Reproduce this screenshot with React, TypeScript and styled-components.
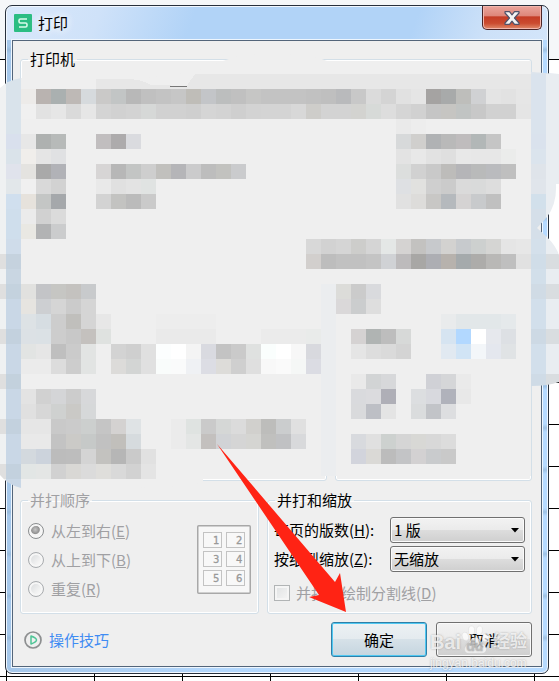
import React from 'react';
import styled, { createGlobalStyle, css } from 'styled-components';

const GlobalStyle = createGlobalStyle`
  * { box-sizing: border-box; }
  body {
    margin: 0;
    font-family: "Noto Sans CJK SC", sans-serif;
    font-size: 15px;
    line-height: 22px;
    color: #000;
  }
  button, select, input { font: inherit; color: inherit; margin: 0; }
`;

const Sheet = styled.div`
  position: relative;
  display: flex;
  min-height: 100vh;
  padding: 5px 10px 7px 5px;
  overflow: hidden;
  background:
    linear-gradient(#f5f7f9 59px, #000 59px, #000 60px, #fff 60px, #fff 250px, transparent 250px),
    linear-gradient(#000 1px, transparent 1px) 0 4px / 100% 42px,
    linear-gradient(90deg, #000 1px, transparent 1px) 6px 0 / 88px 100%,
    #fff;
`;

const Window = styled.section`
  display: flex;
  flex: 1;
  flex-direction: column;
  padding: 0 6px 6px;
  border: 1px solid #28303c;
  border-radius: 7px;
  box-shadow: inset 0 0 0 1px #f1f7fe;
  background:
    linear-gradient(110deg, #d9e8fb 0, #cfe2f9 90px, #b1d3f7 180px, #b1d3f7 390px, #cde1f8 460px, #d3e5fa 100%) 0 0 / 100% 34px no-repeat,
    linear-gradient(transparent 0, #8fb2d299 4px, transparent 8px) 0 40px / 100% 42px,
    linear-gradient(90deg, #a5c7ea 0, #b4d8fd 40%, #b6daff 100%);
`;

const TitleBar = styled.header`
  display: flex;
  align-items: flex-start;
  justify-content: space-between;
  height: 34px;
  padding-left: 2px;
`;

const Title = styled.h1`
  display: flex;
  align-items: center;
  gap: 6px;
  height: 34px;
  margin: 0;
  font-size: 15px;
  font-weight: 400;
  text-shadow: 0 0 8px #fff, 0 0 8px #fff;
`;

const CloseButton = styled.button`
  display: flex;
  align-items: center;
  justify-content: center;
  width: 60px;
  height: 24px;
  padding: 0;
  border: 1px solid #4c2426;
  border-top: 0;
  border-radius: 0 0 5px 5px;
  box-shadow: inset 0 0 0 1px #f3b7ad;
  background: linear-gradient(#eaa59c 0, #dd8478 45%, #c43b25 46%, #cb4b30 75%, #e08b6b 100%);
`;

const Body = styled.main`
  display: flex;
  flex: 1;
  flex-direction: column;
  gap: 8px;
  padding: 7px 9px 9px 7px;
  border: 1px solid #53657a;
  box-shadow: 0 0 0 1px #eef6fe;
  background: #efefef;
`;

const Group = styled.fieldset<{ $grow?: boolean }>`
  min-width: 0;
  margin: 0;
  padding: 6px 7px 8px;
  border: 1px solid #d3dfe8;
  border-radius: 3px;
  box-shadow: inset 0 0 0 1px #fff;
  ${(p) => p.$grow && css`flex: 1;`}
`;

const Legend = styled.legend`
  padding: 0 2px;
`;

const Pair = styled.div<{ $columns: string; $grow?: boolean }>`
  display: grid;
  grid-template-columns: ${(p) => p.$columns};
  gap: 8px;
  ${(p) => p.$grow && css`flex: 1;`}
`;

const DisabledGroup = styled(Group)`
  color: #a0a0a3;
`;

const OrderLayout = styled.div`
  display: flex;
  justify-content: space-between;
`;

const Options = styled.div`
  display: flex;
  flex-direction: column;
  gap: 7px;
  padding-top: 3px;
`;

const Option = styled.label`
  display: flex;
  align-items: center;
  gap: 7px;
  height: 22px;
  white-space: nowrap;
`;

const Radio = styled.input`
  appearance: none;
  width: 16px;
  height: 16px;
  border: 1px solid #a9acaf;
  border-radius: 50%;
  box-shadow: inset 0 0 0 2px #f6f6f6;
  background: linear-gradient(135deg, #d5d8da, #f4f4f4 70%);
  &:checked {
    border-color: #8b8e90;
    background: radial-gradient(circle at 45% 40%, #c6c6c6 0, #929292 4px, #f4f4f4 5px);
  }
`;

const CheckBox = styled.input`
  appearance: none;
  width: 16px;
  height: 16px;
  border: 1px solid #b1b4b5;
  box-shadow: inset 0 0 0 2px #f5f5f5;
  background: linear-gradient(135deg, #dfe1e2, #f6f6f6);
`;

const Preview = styled.div`
  display: flex;
  padding-top: 8px;
`;

const Scaling = styled.div`
  display: grid;
  grid-template-columns: 1fr 135px;
  row-gap: 3px;
  align-items: center;
  margin-right: -1px;
  margin-left: -1px;
  white-space: nowrap;
`;

const DropDown = styled.span`
  position: relative;
  display: block;
  svg {
    position: absolute;
    top: 11px;
    right: 6px;
    pointer-events: none;
  }
`;

const Select = styled.select`
  display: block;
  appearance: none;
  width: 100%;
  height: 26px;
  padding: 0 20px 0 3px;
  border: 1px solid #707070;
  border-radius: 3px;
  box-shadow: inset 0 0 0 1px #fbfbfb;
  background: linear-gradient(#f2f2f2 0, #ebebeb 48%, #dddddd 50%, #cfcfcf 100%);
`;

const LineOption = styled(Option)`
  height: 24px;
  margin-top: 9px;
  margin-left: -1px;
  gap: 6px;
  color: #a0a0a3;
`;

const Footer = styled.footer`
  display: flex;
  align-items: center;
  justify-content: space-between;
`;

const Tips = styled.a`
  display: flex;
  align-items: center;
  gap: 7px;
  padding-left: 4px;
  color: #3f8cf3;
  text-decoration: none;
`;

const Actions = styled.div`
  display: flex;
  gap: 9px;
`;

const Push = styled.button<{ $primary?: boolean }>`
  width: 96px;
  height: 35px;
  padding: 0;
  border: 1px solid ${(p) => (p.$primary ? '#2f7fa8' : '#707070')};
  border-radius: 3px;
  box-shadow: inset 0 0 0 ${(p) => (p.$primary ? '1px #4fc8f2' : '1px #fafafa')};
  background: ${(p) => p.$primary
    ? 'linear-gradient(#edf1f4 0, #e4ebef 48%, #d6e1e8 50%, #c5d5df 100%)'
    : 'linear-gradient(#f2f2f2 0, #ebebeb 48%, #dddddd 50%, #cfcfcf 100%)'};
`;

const Overlay = styled.svg`
  position: absolute;
  top: 0;
  left: 0;
  pointer-events: none;
`;

const Watermark = styled.div`
  position: absolute;
  right: 32px;
  bottom: 11px;
  color: #ffffffc0;
  font-family: "Liberation Sans", "Noto Sans CJK SC", sans-serif;
  text-shadow: 0 0 2px #6668;
  white-space: nowrap;
  pointer-events: none;
`;

const Brand = styled.div`
  display: flex;
  align-items: flex-end;
  height: 34px;
  font-size: 20px;
  font-weight: 700;
  line-height: 28px;
`;

const BrandSuffix = styled.span`
  margin-left: 4px;
  font-size: 17px;
`;

const Address = styled.div`
  font-size: 12px;
  line-height: 14px;
`;

const CELL = 15;
const ORIGIN_X = 6;
const ORIGIN_Y = 74;

// Each entry: row, first column, colours; two digits stand for a neutral grey.
const cells: [number, number, string][] = [
  [1, 1, 'edebe9 b9b3b0 aab0b0 beb9b6 d6dadd cac9c8 c2c5c5 b8 c0 c3 c6 bfbdb8 c3c5c8 bcbebe c0 c6c6c5 c3 c3 c3 c1 bf b9babc c8 db d4 e1 e5 a5a3a2 a8aaaa bebebb d0d1d3 e4 e2 e6'],
  [2, 1, 'f0 e2 e6 da e6 d4 d1 d3 d6d8d7 d1 d1 cf d5 d3 cf d3 d4 d4 d8 cecdca d3 d3 d3d3d0 d7dad8 dd d5 d1 c5 c6c5c2 c1c4c3 c8 d1 d1 e5'],
  [3, 26, 'ea ed'],
  [4, 1, 'e7 aeb1b0 b7bab9'], [4, 6, 'c1bebf adabac dadbdf'], [4, 26, 'd7d9da d0cfcd b0b2b4 b9 bfbcbd b2b7b7 c5'],
  [5, 1, 'f0eeeb e5 e0e1e3'], [5, 26, 'e3 e8 e2 df e8 e7 e7 ebeceb'],
  [6, 1, 'e4e3e0 a9 b1b2b7'], [6, 6, 'd7d5d5 b7 c3c5c4 ce c1c0bd b5b5b8 cbcbcc bd c2c2bf cacbcd'], [6, 26, 'dcdedd d1 c9 bdbcba b5b5b8 b9baba babbbe bf'],
  [7, 1, 'f0 d9 d2'], [7, 6, 'e9 e0 e3 e0e3e2'], [7, 26, 'dee0e3 e1e1df cf cb da d9dada dd'],
  [8, 1, 'e6e2dc c4c6c5 a5a8ab'], [8, 6, 'd3 c3c3c1 bb ca'], [8, 26, 'e1 dddcda c8c7c5 b5b9bd d5d3d3 c8cacc c0'],
  [9, 1, 'eb d1 db'],
  [10, 1, 'e9e8e3 b2b3b4 cbcccd'],
  [11, 20, 'd8 d2 d5 cdcdcb d5 e4e7e6 d5d3d2 c3c2c0 c7c9cc d3d2d0 c7cacd cdd0cf d5d5d3 e5 e7'],
  [12, 20, 'd2cfcd bd c1 c1 c4 d0d2d5 bdbbbc a8a7a5 adaeb3 b7b2ad a5aaac adacaa b9b8b6 bf e1'],
  [14, 1, 'e1e1df c3c4c7 c6c6c3 c4c2bf c8cacc'], [14, 22, 'dcdcd9 cb d9dadd'],
  [15, 1, 'e6e4e0 cdcfd2 d5 cb d5'], [15, 22, 'dad8d9 cbcdce de'],
  [16, 1, 'dde2e5 d6dde2 cd c0bfbc d5 e7'], [16, 10, 'ed ed ed ed'], [16, 29, 'e9ebec e2e7e9 e2e7e9 e2e7e9 e5e9eb'],
  [17, 1, 'dce1e5 dbe1e5 cd c8 c4c1be dfe2e0'], [17, 10, 'ea ea ea ea'], [17, 17, 'eb eb eb e9ebea'], [17, 23, 'd5d2d2 b0b4b3 bd d7d9d8'], [17, 29, 'd6e4f1 b2d8ff ff e6e8ed dde0e4'],
  [18, 1, 'e2e4e3 e6 bf cb e2e4e3'], [18, 7, 'd3 cf e0 fcfefe ff f4 d9dae0 c3 ca dfe1e0 fafefd ff f7 d8d9de'], [18, 23, 'e5 dd da d4'], [18, 29, 'e1e9f1 d1e4f5 f3f6f9 e4e7ee e0e3e5'],
  [19, 1, 'eb eb dc cd e2e4e3'], [19, 7, 'dcdbd9 d3d5d4 e0 f9fcfb fafbfb eff1f4 dcdde4 dddcd9 cf df f8 fa f5f7f6 dbdce3'],
  [20, 23, 'e9 d2d4d5 d7d8da'], [20, 28, 'd0d1d6 d5d6d8 ea'],
  [21, 1, 'e3 d1 d4d5d7 cc d7d8da'], [21, 23, 'd9dadd dbdbde afafb7'], [21, 27, 'dcdee0 d8d9de b0b2bb e8'],
  [22, 1, 'e0 d7 cfd1d0 cac9c6 d6d8d9'], [22, 23, 'd9dadc bdbfc5 e4'], [22, 27, 'dadcdd c2c4c8 dddee0'],
  [23, 1, 'e6 e6 c9 cb cccfce c5 d4d2d1 dfe3e5'], [23, 11, 'eb dfe3e1 ca d5d7d6 db d1d0cd bdbdbb cbcdce e0'],
  [24, 1, 'e9 e9 c3 cbcac7 c6c9c8 c1 c1bfbb d6dbde'], [24, 11, 'eb e4e6e5 c3c0be d1d3d6 d5 d5d5d2 c0c0be c0c1c3 d8d9db'], [24, 23, 'd8dade e0 cdd1cf d5 d8d8d5 d8 dc'],
  [25, 1, 'd3d9de ccd3dc bc bd d4 c3c2bf b6 ca e1'], [25, 23, 'd2d4dc dad9d6 bc c3c4c6 d3d1d2 c9cbcd c9'],
  [26, 1, 'e2e6e5 e4e6e5 d1 d9d8d5 db dfdedb d9 d2 e4'],
];

const leftEdge = 'd9e3eb d9e3eb d9e3eb d9e3eb d9e0ed dae3ea e0e3ec e2e7ea d0dfee cfdeec cfdeec cfdcea c5d2de c9d6e2 c4d2de c9d7e6 c9d7e6 c3d1de c9d7e6 c9d7e6 c3d1dd c9d7e6 c9d7e6 c3d1de c9d7e6 c9d7e6 c3d1de c9d7e6';
const rightEdge = 'dae3ed dae3ed dae3ed dae3ed dae2ed dbe4ed dfe4ea e0e5eb d2e0eb d5dfe9 d5dfe9 d4e0eb d0dde8 d2dfea d0dbe5 d2dfeb d2dfeb cdd9e4 d2dfeb d2dfeb cfdbe6';
const darkRows = [12, 14, 17, 20, 23, 26];

const hex = (c: string) => '#' + (c.length === 2 ? c + c + c : c);

const Strip = ({ x, width, colors }: { x: number; width: number; colors: string[] }) => (
  <>
    {colors.map((c, i) => (
      <rect key={i} x={x} y={ORIGIN_Y + i * CELL} width={width} height={CELL} fill={hex(c)} />
    ))}
  </>
);

const Mosaic = () => (
  <Overlay width="559" height="681" viewBox="0 0 559 681" aria-hidden="true">
    <clipPath id="smudge">
      <path d="M0 88Q8 80 21 78H140Q190 76 223 61Q240 54 275 54Q310 54 327 61H531V72L559 74V184H556Q557 204 547 217L537 228L547 237Q556 246 559 255V382Q548 386 531 386V476H203V482Q180 487 130 488H21Q8 485 0 475Z" />
    </clipPath>
    <g clipPath="url(#smudge)" shapeRendering="crispEdges">
      <rect x="21" y="54" width="510" height="436" fill="#efefef" />
      <path d="M96 79H130Q143 80 151 85L190 86V89H96ZM187 86Q191 78 196 74H531V89H187Z" fill="#e7e7e7" />
      <path d="M170 86.500H187" stroke="#777" />
      <Strip x={0} width={6} colors={Array.from({ length: 28 }, (_, i) => (darkRows.includes(i) ? 'df' : 'eff1f2'))} />
      <Strip x={6} width={15} colors={leftEdge.split(' ')} />
      <Strip x={531} width={15} colors={rightEdge.split(' ')} />
      <Strip x={546} width={13} colors={Array.from({ length: 21 }, (_, i) => (darkRows.includes(i) ? 'd9dde0' : 'e9edf1'))} />
      <rect x="531" y="70" width="28" height="4" fill="#dce4ec" />
      <rect x="321" y="284" width="15" height="192" fill="#ebedef" />
      {cells.map(([row, col, colors]) =>
        colors.split(' ').map((c, i) => (
          <rect
            key={`${row}-${col + i}`}
            x={ORIGIN_X + (col + i) * CELL}
            y={ORIGIN_Y + row * CELL}
            width={CELL}
            height={CELL}
            fill={hex(c)}
          />
        ))
      )}
    </g>
  </Overlay>
);

const Arrow = () => (
  <Overlay width="559" height="681" viewBox="0 0 559 681" aria-hidden="true">
    <path d="M217 444L335 582L340 573L346 612L309 597L319 595Z" fill="#ff2314" />
  </Overlay>
);

const Logo = () => (
  <svg width="18" height="18" viewBox="0 0 18 18" aria-hidden="true">
    <rect width="18" height="18" rx="1" fill="#2bbd83" />
    <path d="M13 5H6.5Q5 5 5 6.500V7.500Q5 9 6.500 9H11.500Q13 9 13 10.500V11.500Q13 13 11.500 13H5" fill="none" stroke="#d9fbeb" strokeWidth="1.600" />
  </svg>
);

const CloseMark = () => (
  <svg width="16" height="14" viewBox="0 0 16 14" aria-hidden="true">
    <path d="M1 .7H5.500L8 3.800L10.500.7H15V2L10.500 7L15 12V13.300H10.500L8 10.200L5.500 13.300H1V12L5.500 7L1 2Z" fill="#f4f4f4" stroke="#50526a" strokeWidth="1.200" strokeLinejoin="round" />
  </svg>
);

const Caret = () => (
  <svg width="8" height="5" viewBox="0 0 8 5" aria-hidden="true">
    <path d="M0 0H8L4 4.500Z" />
  </svg>
);

const PlayMark = () => (
  <svg width="18" height="18" viewBox="0 0 18 18" fill="none" aria-hidden="true">
    <circle cx="9" cy="9" r="8" stroke="#8d8f90" strokeWidth="1.700" />
    <path d="M7 5V13Q12.500 11 12.500 9Q12.500 7 7 5Z" stroke="#4fc596" strokeWidth="1.500" strokeLinejoin="round" />
  </svg>
);

const PageOrder = () => (
  <svg width="54" height="69" viewBox="0 0 54 69" role="img" aria-label="1 2 3 4 5 6">
    <rect x=".75" y=".75" width="52.500" height="67.500" rx="1" fill="#f7f7f7" stroke="#a8a8a8" strokeWidth="1.500" />
    {[1, 2, 3, 4, 5, 6].map((n, i) => {
      const x = 6 + (i % 2) * 23;
      const y = 7 + Math.floor(i / 2) * 19;
      return (
        <g key={n}>
          <rect x={x + 0.5} y={y + 0.5} width="18" height="15" fill="#f8f8f8" stroke="#c3c3c3" />
          <text x={x + 10} y={y + 12} fontSize="10" fontFamily="DejaVu Sans" fill="#999" stroke="#999" strokeWidth=".3">{n}</text>
        </g>
      );
    })}
  </svg>
);

const Paw = () => (
  <svg width="28" height="32" viewBox="0 0 32 34" fill="#ffffffb0" stroke="#bbb7" strokeWidth=".5" aria-hidden="true">
    <ellipse cx="5" cy="13" rx="3.500" ry="5" transform="rotate(-15 5 13)" />
    <ellipse cx="12" cy="6" rx="3.500" ry="5" />
    <ellipse cx="21" cy="6" rx="3.500" ry="5" transform="rotate(12 21 6)" />
    <ellipse cx="28" cy="14" rx="3.500" ry="5" transform="rotate(20 28 14)" />
    <path d="M16 14C11 14 11 19 7 22C2 26 4 32 9 32C13 32 19 32 24 32C29 32 31 26 26 22C22 19 21 14 16 14Z" />
    <text x="6" y="30" fontSize="16" fontWeight="700" fontFamily="Liberation Sans" fill="#b9b9b9a0">du</text>
  </svg>
);

const Key = ({ children }: { children: string }) => <>(<u>{children}</u>)</>;

export default function App() {
  return (
    <>
      <GlobalStyle />
      <Sheet>
        <Window>
          <TitleBar>
            <Title><Logo />打印</Title>
            <CloseButton aria-label="关闭"><CloseMark /></CloseButton>
          </TitleBar>
          <Body>
            <Group $grow>
              <Legend>打印机</Legend>
            </Group>
            <Pair $columns="307fr 197fr" $grow>
              <Group />
              <Group />
            </Pair>
            <Pair $columns="239fr 265fr">
              <DisabledGroup disabled>
                <Legend>并打顺序</Legend>
                <OrderLayout>
                  <Options>
                    <Option><Radio type="radio" name="order" defaultChecked /><span>从左到右<Key>E</Key></span></Option>
                    <Option><Radio type="radio" name="order" /><span>从上到下<Key>B</Key></span></Option>
                    <Option><Radio type="radio" name="order" /><span>重复<Key>R</Key></span></Option>
                  </Options>
                  <Preview><PageOrder /></Preview>
                </OrderLayout>
              </DisabledGroup>
              <Group>
                <Legend>并打和缩放</Legend>
                <Scaling>
                  <label htmlFor="pages">每页的版数<Key>H</Key>:</label>
                  <DropDown>
                    <Select id="pages"><option>1 版</option></Select>
                    <Caret />
                  </DropDown>
                  <label htmlFor="paper">按纸型缩放<Key>Z</Key>:</label>
                  <DropDown>
                    <Select id="paper"><option>无缩放</option></Select>
                    <Caret />
                  </DropDown>
                </Scaling>
                <LineOption>
                  <CheckBox type="checkbox" disabled />
                  <span>并打时绘制分割线<Key>D</Key></span>
                </LineOption>
              </Group>
            </Pair>
            <Footer>
              <Tips href="#tips"><PlayMark />操作技巧</Tips>
              <Actions>
                <Push $primary>确定</Push>
                <Push>取消</Push>
              </Actions>
            </Footer>
          </Body>
        </Window>
        <Mosaic />
        <Arrow />
        <Watermark>
          <Brand>Bai<Paw /><BrandSuffix>经验</BrandSuffix></Brand>
          <Address>jingyan.baidu.com</Address>
        </Watermark>
      </Sheet>
    </>
  );
}
